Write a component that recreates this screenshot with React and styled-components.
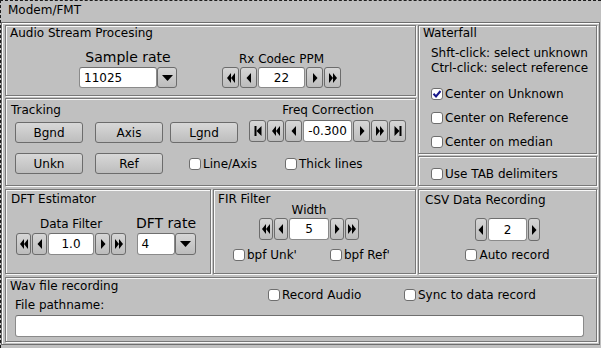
import React from "react";
import styled, { createGlobalStyle } from "styled-components";

const GlobalStyle = createGlobalStyle`
  html, body {
    margin: 0;
    padding: 0;
    background: #c0c0c0;
  }
  body {
    font-family: "DejaVu Sans", "Liberation Sans", sans-serif;
    font-size: 12px;
    color: #000;
  }
`;

const Window = styled.div`
  width: 601px;
  height: 348px;
  box-sizing: border-box;
  border-top: 1px dashed #1e1e1e;
  border-left: 1px dashed #1e1e1e;
  overflow: hidden;
`;

const TabLabel = styled.div`
  height: 21px;
  box-sizing: border-box;
  padding: 2px 0 0 7px;
  line-height: 14px;
`;

const TabBody = styled.div`
  width: 599px;
  box-sizing: border-box;
  border: 1px solid #6e6e6e;
  box-shadow: inset 1px 1px 0 #fff;
  padding: 2px 2px 2px 3px;
  display: flex;
  flex-direction: column;
  gap: 3px;
`;

const Row = styled.div`
  display: flex;
  gap: 2px;
`;

const Column = styled.div`
  display: flex;
  flex-direction: column;
  gap: 2px;
  width: ${p => p.$w}px;
`;

const Frame = styled.div`
  box-sizing: border-box;
  width: ${p => (p.$w ? `${p.$w}px` : "auto")};
  height: ${p => p.$h}px;
  border: 1px solid #787878;
  box-shadow: inset 1px 1px 0 #f8f8f8, 1px 1px 0 #f8f8f8;
  display: flex;
  flex-direction: column;
  align-items: flex-start;
`;

const GroupTitle = styled.div`
  line-height: ${p => p.$lh || 14}px;
  margin: ${p => p.$mt || 0}px 0 0 ${p => p.$ml ?? 4}px;
  white-space: nowrap;
`;

const ParamRow = styled.div`
  display: flex;
  align-items: flex-end;
  gap: ${p => p.$gap}px;
  margin: ${p => p.$mt}px 0 0 ${p => p.$ml}px;
`;

const Labeled = styled.div`
  display: flex;
  flex-direction: column;
  align-items: center;
  gap: ${p => p.$gap || 2}px;
  width: ${p => (p.$w ? `${p.$w}px` : "auto")};
  margin: ${p => p.$mt || 0}px 0 0 ${p => p.$ml || 0}px;
`;

const Label = styled.div`
  font-size: ${p => p.$size || 12}px;
  line-height: ${p => p.$lh || 14}px;
  white-space: nowrap;
`;

const Field = styled.div`
  box-sizing: border-box;
  width: ${p => p.$w}px;
  height: 100%;
  background: #fff;
  border: 1px solid #8a8a8a;
  border-top-color: #6f6f6f;
  border-radius: 3px;
  display: flex;
  align-items: center;
  justify-content: ${p => (p.$left ? "flex-start" : "center")};
  padding-left: ${p => (p.$left ? 4 : 0)}px;
  font-size: 12px;
`;

const ArrowBtn = styled.div`
  box-sizing: border-box;
  width: ${p => p.$w}px;
  height: 100%;
  border: 1px solid #6c6c6c;
  border-radius: 3px;
  background: linear-gradient(#d6d6d6, #bcbcbc);
  display: flex;
  align-items: center;
  justify-content: center;
`;

const CounterBox = styled.div`
  display: flex;
  gap: ${p => p.$gap ?? 1}px;
  height: ${p => p.$h}px;
  margin-top: ${p => p.$mt || 0}px;
  align-self: ${p => p.$self || "auto"};
`;

const PushBtn = styled.div`
  box-sizing: border-box;
  width: 68px;
  height: 21px;
  margin-top: ${p => p.$mt || 0}px;
  border: 1px solid #6c6c6c;
  border-radius: 3px;
  background: linear-gradient(#d8d8d8, #bdbdbd);
  display: flex;
  align-items: center;
  justify-content: center;
  line-height: 14px;
`;

const TrackGrid = styled.div`
  display: grid;
  grid-template-columns: 80px 75px 79px auto;
  grid-template-rows: 17px 33px 21px;
  padding: 4px 0 0 9px;
`;

const TrackTitle = styled(GroupTitle)`
  grid-column: 1 / 4;
  margin-left: -4px;
`;

const FreqLabel = styled.div`
  width: 158px;
  text-align: center;
  line-height: 14px;
`;

const CheckRow = styled.div`
  display: inline-flex;
  align-items: center;
  gap: 2px;
  line-height: 14px;
  white-space: nowrap;
  width: ${p => (p.$w ? `${p.$w}px` : "auto")};
  margin: ${p => p.$mt || 0}px 0 0 ${p => p.$ml || 0}px;
  align-self: ${p => p.$self || "auto"};
`;

const Box = styled.div`
  box-sizing: border-box;
  width: 12px;
  height: 12px;
  flex: none;
  background: #fff;
  border: 1px solid #6e6e6e;
  border-radius: 3px;
  display: flex;
  align-items: center;
  justify-content: center;
`;

const CheckColumn = styled.div`
  display: flex;
  flex-direction: column;
  align-items: flex-start;
  gap: 10px;
  margin: ${p => p.$mt}px 0 0 12px;
`;

const CheckLine = styled.div`
  display: flex;
  gap: ${p => p.$gap}px;
  margin: ${p => p.$mt}px 0 0 ${p => p.$ml}px;
`;

const HelpText = styled.div`
  margin: 6px 0 0 12px;
  line-height: 15px;
  white-space: nowrap;
`;

const WavTop = styled.div`
  display: flex;
  align-items: center;
`;

const WavLeft = styled.div`
  width: 262px;
`;

const Caption = styled.div`
  margin: 5px 0 0 9px;
  line-height: 14px;
`;

const PathInput = styled.div`
  box-sizing: border-box;
  width: 569px;
  height: 22px;
  margin: 3px 0 0 9px;
  background: #fff;
  border: 1px solid #8a8a8a;
  border-top-color: #6f6f6f;
  border-radius: 3px;
`;

const ArrowIcon = ({ kind }) => {
  const flip = kind.startsWith("r");
  const shape = kind.slice(1);
  return (
    <svg width="10" height="10" viewBox="0 0 10 10">
      <g fill="#000" transform={flip ? "translate(10,0) scale(-1,1)" : undefined}>
        {shape === "" && <polygon points="7,0 7,10 2.5,5" />}
        {shape === "2" && (
          <>
            <polygon points="5,0 5,10 1,5" />
            <polygon points="9,0 9,10 5,5" />
          </>
        )}
        {shape === "b" && (
          <>
            <rect x="1.5" y="0" width="2" height="10" />
            <polygon points="8.5,0 8.5,10 3.5,5" />
          </>
        )}
      </g>
    </svg>
  );
};

const DownIcon = () => (
  <svg width="11" height="6" viewBox="0 0 11 6">
    <polygon points="0,0 11,0 5.5,6" fill="#000" />
  </svg>
);

const Counter = ({ value, left, right, btnW, fieldW, h, mt, self }) => (
  <CounterBox $h={h} $mt={mt} $self={self}>
    {left.map(k => (
      <ArrowBtn key={k} $w={btnW}>
        <ArrowIcon kind={k} />
      </ArrowBtn>
    ))}
    <Field $w={fieldW}>{value}</Field>
    {right.map(k => (
      <ArrowBtn key={k} $w={btnW}>
        <ArrowIcon kind={k} />
      </ArrowBtn>
    ))}
  </CounterBox>
);

const Combo = ({ value, fieldW, btnW, h }) => (
  <CounterBox $h={h} $gap={0}>
    <Field $w={fieldW} $left>
      {value}
    </Field>
    <ArrowBtn $w={btnW}>
      <DownIcon />
    </ArrowBtn>
  </CounterBox>
);

const Check = ({ label, checked, w, mt, ml, self }) => (
  <CheckRow $w={w} $mt={mt} $ml={ml} $self={self}>
    <Box>
      {checked && (
        <svg width="10" height="10" viewBox="0 0 10 10">
          <path d="M1.5 4.8 L4 7.5 L8.5 2" fill="none" stroke="#17178a" strokeWidth="2" />
        </svg>
      )}
    </Box>
    <span>{label}</span>
  </CheckRow>
);

export default function App() {
  return (
    <>
      <GlobalStyle />
      <Window>
        <TabLabel>Modem/FMT</TabLabel>
        <TabBody>
          <Row>
            <Column $w={411}>
              <Frame $h={71}>
                <GroupTitle>Audio Stream Procesing</GroupTitle>
                <ParamRow $mt={9} $ml={73} $gap={45}>
                  <Labeled $w={98} $gap={2}>
                    <Label $size={14} $lh={16}>Sample rate</Label>
                    <Combo value="11025" fieldW={78} btnW={20} h={21} />
                  </Labeled>
                  <Labeled $gap={1}>
                    <Label $lh={13}>Rx Codec PPM</Label>
                    <Counter value="22" left={["l2", "l"]} right={["r", "r2"]} btnW={17} fieldW={47} h={21} />
                  </Labeled>
                </ParamRow>
              </Frame>
              <Frame $h={88}>
                <TrackGrid>
                  <TrackTitle>Tracking</TrackTitle>
                  <FreqLabel>Freq Correction</FreqLabel>
                  <PushBtn $mt={2}>Bgnd</PushBtn>
                  <PushBtn $mt={2}>Axis</PushBtn>
                  <PushBtn $mt={2}>Lgnd</PushBtn>
                  <Counter
                    value="-0.300"
                    left={["lb", "l2", "l"]}
                    right={["r", "r2", "rb"]}
                    btnW={17}
                    fieldW={49}
                    h={22}
                  />
                  <PushBtn>Unkn</PushBtn>
                  <PushBtn>Ref</PushBtn>
                  <Check label="Line/Axis" ml={19} self="center" />
                  <Check label="Thick lines" ml={36} self="center" />
                </TrackGrid>
              </Frame>
            </Column>
            <Column $w={179}>
              <Frame $h={129}>
                <GroupTitle>Waterfall</GroupTitle>
                <HelpText>
                  Shft-click: select unknown
                  <br />
                  Ctrl-click: select reference
                </HelpText>
                <CheckColumn $mt={11}>
                  <Check label="Center on Unknown" checked />
                  <Check label="Center on Reference" />
                  <Check label="Center on median" />
                </CheckColumn>
              </Frame>
              <Frame $h={30}>
                <CheckColumn $mt={10}>
                  <Check label="Use TAB delimiters" />
                </CheckColumn>
              </Frame>
            </Column>
          </Row>
          <Row>
            <Frame $w={206} $h={85}>
              <GroupTitle $mt={2} $ml={5}>DFT Estimator</GroupTitle>
              <ParamRow $mt={9} $ml={10} $gap={10}>
                <Labeled $gap={2}>
                  <Label>Data Filter</Label>
                  <Counter value="1.0" left={["l2", "l"]} right={["r", "r2"]} btnW={15} fieldW={46} h={22} />
                </Labeled>
                <Labeled $gap={2}>
                  <Label $size={14} $lh={16}>DFT rate</Label>
                  <Combo value="4" fieldW={38} btnW={21} h={22} />
                </Labeled>
              </ParamRow>
            </Frame>
            <Frame $w={203} $h={85}>
              <GroupTitle $mt={3} $lh={12}>FIR Filter</GroupTitle>
              <Labeled $gap={2} $ml={45} $mt={-1}>
                <Label $lh={12}>Width</Label>
                <Counter value="5" left={["l2", "l"]} right={["r", "r2"]} btnW={14} fieldW={40} h={22} />
              </Labeled>
              <CheckLine $mt={8} $ml={19} $gap={33}>
                <Check label="bpf Unk'" />
                <Check label="bpf Ref'" />
              </CheckLine>
            </Frame>
            <Frame $w={179} $h={85}>
              <GroupTitle $mt={3} $ml={6}>CSV Data Recording</GroupTitle>
              <Counter value="2" left={["l"]} right={["r"]} btnW={12} fieldW={39} h={23} mt={11} self="center" />
              <Check label="Auto record" mt={7} self="center" />
            </Frame>
          </Row>
          <Frame $h={65}>
            <WavTop>
              <WavLeft>
                <GroupTitle $mt={1}>Wav file recording</GroupTitle>
                <Caption>File pathname:</Caption>
              </WavLeft>
              <Check label="Record Audio" w={136} />
              <Check label="Sync to data record" />
            </WavTop>
            <PathInput />
          </Frame>
        </TabBody>
      </Window>
    </>
  );
}
